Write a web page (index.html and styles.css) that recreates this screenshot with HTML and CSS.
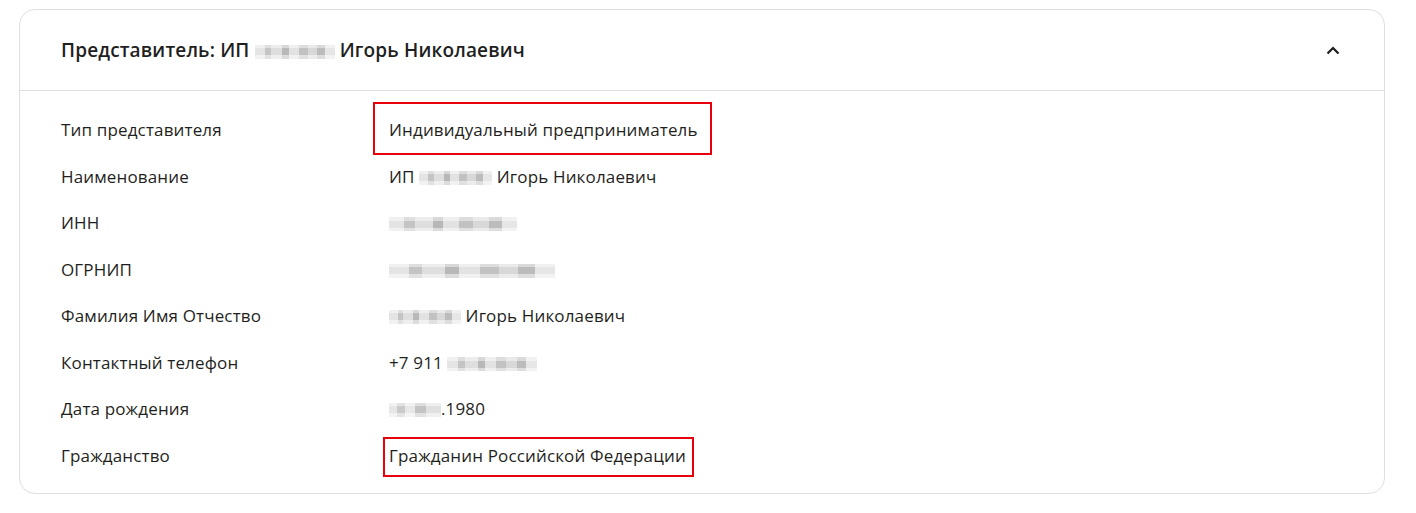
FILE: index.html
```html
<!DOCTYPE html>
<html lang="ru">
<head>
    <meta charset="utf-8" />
    <title>Представитель</title>
    <meta name="viewport" content="width=device-width, initial-scale=1">
    <link rel="stylesheet" href="styles.css">
</head>
<body>
    <div class="card">
        <div class="card-head">
            <h2 class="card-title">Представитель: ИП <span class="blur" style="width: 80px"></span> Игорь Николаевич</h2>
            <svg class="chevron" width="14" height="9" viewBox="0 0 14 9">
                <path d="M1.5 7.5 L7 2 L12.5 7.5" fill="none" stroke="#1c1c1e" stroke-width="2.2"/>
            </svg>
        </div>
        <div class="card-body">
            <div class="row">
                <div class="label">Тип представителя</div>
                <div class="value"><span class="mark mark-big"></span>Индивидуальный предприниматель</div>
            </div>
            <div class="row">
                <div class="label">Наименование</div>
                <div class="value">ИП <span class="blur" style="width: 73px"></span> Игорь Николаевич</div>
            </div>
            <div class="row">
                <div class="label">ИНН</div>
                <div class="value"><span class="blur" style="width: 128px"></span></div>
            </div>
            <div class="row">
                <div class="label">ОГРНИП</div>
                <div class="value"><span class="blur" style="width: 166px"></span></div>
            </div>
            <div class="row">
                <div class="label">Фамилия Имя Отчество</div>
                <div class="value"><span class="blur" style="width: 72px"></span> Игорь Николаевич</div>
            </div>
            <div class="row">
                <div class="label">Контактный телефон</div>
                <div class="value">+7 911 <span class="blur" style="width: 90px"></span></div>
            </div>
            <div class="row">
                <div class="label">Дата рождения</div>
                <div class="value"><span class="blur blur-tight" style="width: 52px"></span>.1980</div>
            </div>
            <div class="row">
                <div class="label">Гражданство</div>
                <div class="value"><span class="mark mark-small"></span>Гражданин Российской Федерации</div>
            </div>
        </div>
    </div>
</body>
</html>
```

FILE: styles.css
```css
body {
    margin: 0;
    padding: 9px 31px 20px 19px;
    background: #fff;
    color: #1f1f22;
    font-family: "Open Sans", "Noto Sans", sans-serif;
}
.card {
    border: 1px solid #dcdfe3;
    border-radius: 16px;
    overflow: hidden;
}
.card-head {
    display: flex;
    align-items: center;
    justify-content: space-between;
    height: 80px;
    padding: 0 44px 0 41px;
    border-bottom: 1px solid #dcdfe3;
}
.card-title {
    margin: 0;
    font-size: 19px;
    font-weight: 600;
    line-height: 24px;
    letter-spacing: .15px;
}
.chevron {
    display: block;
}
.card-body {
    padding: 16px 41px 14px;
}
.row {
    display: grid;
    grid-template-columns: 328px 1fr;
    align-items: center;
    height: 46.5px;
    font-size: 17px;
    line-height: 22px;
    letter-spacing: .15px;
}
.value {
    position: relative;
}
/* pixelated mask over hidden personal data */
.blur {
    display: inline-block;
    height: 14px;
    vertical-align: -2px;
    background:
        linear-gradient(180deg, rgba(255,255,255,.45) 0 25%, transparent 25% 75%, rgba(255,255,255,.5) 75% 100%),
        linear-gradient(90deg,
            #e4e4e4 0 12%, #c4c4c4 12% 20%, #dedede 20% 34%, #b8b8b8 34% 42%,
            #e2e2e2 42% 55%, #c2c2c2 55% 66%, #d8d8d8 66% 78%, #bcbcbc 78% 88%, #e6e6e6 88% 100%);
}
.blur-tight {
    background:
        linear-gradient(180deg, rgba(255,255,255,.45) 0 25%, transparent 25% 75%, rgba(255,255,255,.5) 75% 100%),
        linear-gradient(90deg,
            #e6e6e6 0 15%, #cacaca 15% 30%, #e8e8e8 30% 50%, #c4c4c4 50% 72%, #e0e0e0 72% 100%);
}
.mark {
    position: absolute;
    border: 2px solid #e8000b;
    pointer-events: none;
}
.mark-big {
    left: -16px;
    top: -17px;
    width: 335px;
    height: 49px;
}
.mark-small {
    left: -6px;
    top: -8px;
    width: 307px;
    height: 36px;
}
```
